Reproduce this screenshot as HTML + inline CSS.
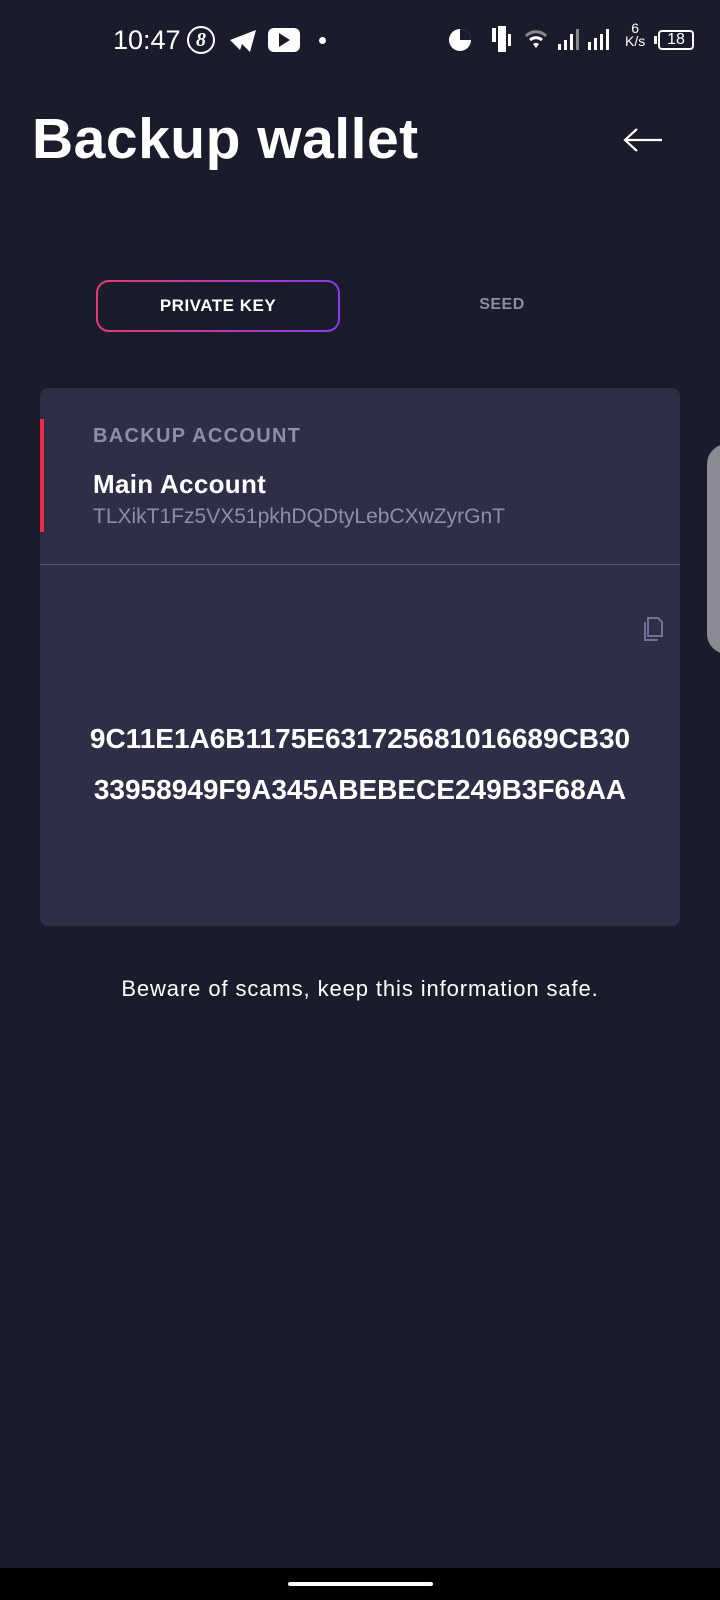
<!DOCTYPE html>
<html><head><meta charset="utf-8"><style>
*{margin:0;padding:0;box-sizing:border-box}
body{width:720px;height:1600px;background:#1b1c2b;font-family:"Liberation Sans",sans-serif;color:#fff;position:relative;overflow:hidden}
.a{position:absolute}
</style></head><body>
<div class="a" style="left:113px;top:25px;font-size:27px;">10:47</div>
<div class="a" style="left:187px;top:26px;width:28px;height:28px;border:2px solid #fff;border-radius:50%;font:italic bold 20px 'Liberation Serif',serif;text-align:center;line-height:24px">8</div>
<svg class="a" style="left:228px;top:28px" width="30" height="26" viewBox="0 0 30 26"><path d="M2 12 L28 2 L22 24 L14 16 L12 22 Z" fill="#fff"/></svg>
<div class="a" style="left:268px;top:28px;width:32px;height:24px;background:#fff;border-radius:6px"></div>
<svg class="a" style="left:279px;top:33px" width="12" height="14"><path d="M0 0 L11 7 L0 14Z" fill="#1b1c2b"/></svg>
<div class="a" style="left:319px;top:37px;width:7px;height:7px;background:#fff;border-radius:50%"></div>
<svg class="a" style="left:448px;top:28px" width="24" height="24"><circle cx="12" cy="12" r="11" fill="#fff"/><path d="M12 12 L12 1 A11 11 0 0 1 23 12Z" fill="#1b1c2b"/></svg>
<div class="a" style="left:492px;top:28px;width:4px;height:14px;background:#fff"></div>
<div class="a" style="left:498px;top:26px;width:8px;height:26px;background:#fff"></div>
<div class="a" style="left:508px;top:34px;width:3px;height:12px;background:#fff"></div>
<svg class="a" style="left:524px;top:28px" width="24" height="24"><path d="M2 8 A14 14 0 0 1 22 8" stroke="#888" stroke-width="3" fill="none"/><path d="M6 12 A9 9 0 0 1 18 12" stroke="#fff" stroke-width="3" fill="none"/><path d="M9 16 A5 5 0 0 1 15 16 L12 20Z" fill="#fff"/></svg>
<svg class="a" style="left:556px;top:28px" width="70" height="24"><rect x="2" y="16" width="3" height="6" fill="#fff"/><rect x="8" y="12" width="3" height="10" fill="#fff"/><rect x="14" y="6" width="3" height="16" fill="#fff"/><rect x="20" y="1" width="3" height="21" fill="#888"/><rect x="32" y="14" width="3" height="8" fill="#fff"/><rect x="38" y="10" width="3" height="12" fill="#fff"/><rect x="44" y="6" width="3" height="16" fill="#fff"/><rect x="50" y="1" width="3" height="21" fill="#fff"/></svg>
<div class="a" style="left:625px;top:22px;font-size:14px;line-height:13px;text-align:center">6<br>K/s</div>
<div class="a" style="left:658px;top:30px;width:36px;height:20px;border:2px solid #fff;border-radius:4px;font-size:16px;text-align:center;line-height:16px">18</div>
<div class="a" style="left:654px;top:36px;width:3px;height:8px;background:#fff"></div>

<div class="a" style="left:32px;top:106px;font-size:57px;font-weight:bold;letter-spacing:0.5px">Backup wallet</div>
<svg class="a" style="left:622px;top:126px" width="42" height="28"><path d="M40 14 H4 M15 3 L3 14 L15 25" stroke="#fff" stroke-width="2.2" fill="none"/></svg>

<div class="a" style="left:96px;top:280px;width:244px;height:52px;border-radius:13px;background:linear-gradient(90deg,#e8396f,#8a3bf0);padding:2px"><div style="width:100%;height:100%;border-radius:11px;background:#1b1c2b;font-size:17px;font-weight:bold;text-align:center;line-height:48px;letter-spacing:.5px">PRIVATE KEY</div></div>
<div class="a" style="left:440px;top:296px;width:124px;text-align:center;font-size:16px;font-weight:bold;color:#8c8ca4;letter-spacing:.5px">SEED</div>

<div class="a" style="left:40px;top:388px;width:640px;height:538px;background:#2e2e46;border-radius:8px"></div>
<div class="a" style="left:40px;top:419px;width:4px;height:113px;background:#ee2a48"></div>
<div class="a" style="left:93px;top:425px;font-size:20px;font-weight:bold;color:#8e8ea8;letter-spacing:1.3px">BACKUP ACCOUNT</div>
<div class="a" style="left:93px;top:469px;font-size:26px;font-weight:bold;letter-spacing:.3px">Main Account</div>
<div class="a" style="left:93px;top:505px;font-size:21px;color:#8e8ea8">TLXikT1Fz5VX51pkhDQDtyLebCXwZyrGnT</div>
<div class="a" style="left:40px;top:564px;width:640px;height:1px;background:#5a5a74"></div>
<svg class="a" style="left:641px;top:614px" width="24" height="28"><path d="M7 4 H17 L21 8 V22 H7Z" stroke="#70709a" stroke-width="2" fill="none"/><path d="M4 8 V26 H17" stroke="#70709a" stroke-width="2" fill="none"/></svg>
<div class="a" style="left:40px;top:713px;width:640px;text-align:center;font-size:28px;font-weight:bold;line-height:51px">9C11E1A6B1175E631725681016689CB30<br>33958949F9A345ABEBECE249B3F68AA</div>

<div class="a" style="left:707px;top:444px;width:40px;height:210px;border-radius:20px;background:#8a8a94"></div>
<div class="a" style="left:0;top:976px;width:720px;text-align:center;font-size:22px;letter-spacing:.9px">Beware of scams, keep this information safe.</div>

<div class="a" style="left:0;top:1568px;width:720px;height:32px;background:#000"></div>
<div class="a" style="left:288px;top:1582px;width:145px;height:4px;border-radius:2px;background:#fff"></div>
</body></html>
